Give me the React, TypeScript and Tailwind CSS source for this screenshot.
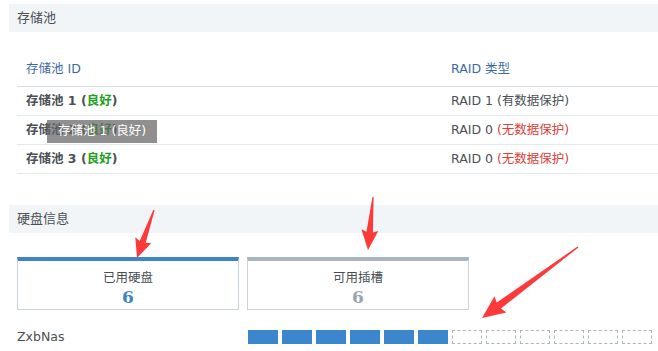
import React from 'react'

const font = { fontFamily: '"DejaVu Sans", "Noto Sans CJK SC", sans-serif' }

const pools = [
  { id: '存储池 1', raid: 'RAID 1', prot: '(有数据保护)', safe: true },
  { id: '存储池 2', raid: 'RAID 0', prot: '(无数据保护)', safe: false },
  { id: '存储池 3', raid: 'RAID 0', prot: '(无数据保护)', safe: false },
]

// arrow polygon from tail to tip
function arrowPoints(tx: number, ty: number, px: number, py: number, head: number, hw: number, sw: number) {
  const dx = px - tx
  const dy = py - ty
  const len = Math.hypot(dx, dy)
  const ux = dx / len
  const uy = dy / len
  const nx = -uy
  const ny = ux
  const bx = px - ux * head
  const by = py - uy * head
  const pts = [
    [tx + nx * 0.6, ty + ny * 0.6],
    [bx + nx * sw, by + ny * sw],
    [bx + nx * hw - ux * 2, by + ny * hw - uy * 2],
    [px, py],
    [bx - nx * hw - ux * 2, by - ny * hw - uy * 2],
    [bx - nx * sw, by - ny * sw],
    [tx - nx * 0.6, ty - ny * 0.6],
  ]
  return pts.map((p) => p.map((v) => v.toFixed(1)).join(',')).join(' ')
}

function SectionTitle({ children }: { children: React.ReactNode }) {
  return (
    <div className="ml-[9px] flex h-[28px] items-center bg-[#f2f5f8] pl-[8px] text-[13px] text-[#4a4f55]">
      {children}
    </div>
  )
}

function Card({ label, value, top, color }: { label: string; value: string; top: string; color: string }) {
  return (
    <div className={`flex h-[53px] w-[222px] flex-col items-center border border-t-4 border-[#c9d3de] ${top}`}>
      <div className="mt-[9px] text-[12.5px] leading-[16px] text-[#4a4f55]">{label}</div>
      <div
        className={`mt-[2px] text-[17px] font-bold leading-[18px] ${color}`}
        style={{ fontFamily: '"DejaVu Serif", "Liberation Serif", serif' }}
      >
        {value}
      </div>
    </div>
  )
}

export default function App() {
  return (
    <div className="relative h-[351px] w-[658px] overflow-hidden bg-white" style={font}>
      <div className="pt-[4px]">
        <SectionTitle>存储池</SectionTitle>

        <div className="ml-[17px] mt-[21px] text-[12.5px]">
          <div className="grid h-[34px] grid-cols-[425px_1fr] items-center border-b border-[#d5dde6] pl-[9px] text-[#3c6aa3]">
            <div>存储池 ID</div>
            <div>RAID 类型</div>
          </div>
          {pools.map((p) => (
            <div
              key={p.id}
              className="grid h-[29px] grid-cols-[425px_1fr] items-center border-b border-[#e4e9ee] pl-[9px] text-[#4a4f55]"
            >
              <div className="font-bold">
                {p.id} (<span className="text-[#22a022]">良好</span>)
              </div>
              <div>
                {p.raid} <span className={p.safe ? '' : 'text-[#de4138]'}>{p.prot}</span>
              </div>
            </div>
          ))}
        </div>

        <div className="mt-[31px]">
          <SectionTitle>硬盘信息</SectionTitle>
        </div>

        <div className="ml-[17px] mt-[24px] flex gap-[8px]">
          <Card label="已用硬盘" value="6" top="border-t-[#3d85c9]" color="text-[#3d85c9]" />
          <Card label="可用插槽" value="6" top="border-t-[#a9b5c2]" color="text-[#9aa4b0]" />
        </div>

        <div className="ml-[17px] mt-[18px] flex items-center">
          <div className="w-[231px] text-[12.5px] text-[#4a4f55]">ZxbNas</div>
          <div className="flex gap-[4px]">
            {Array.from({ length: 12 }).map((_, i) =>
              i < 6 ? (
                <div key={i} className="h-[14px] w-[30px] bg-[#3b86cc]" />
              ) : (
                <div key={i} className="h-[14px] w-[30px] border border-dashed border-[#aab6c3]" />
              ),
            )}
          </div>
        </div>
      </div>

      {/* hover tooltip */}
      <div className="absolute left-[47px] top-[120px] flex h-[23px] items-center bg-[rgba(100,100,100,0.72)] px-[11px] text-[12.5px] text-white">
        存储池 1 (良好)
      </div>

      <svg className="pointer-events-none absolute left-0 top-0" width="658" height="351">
        <polygon points={arrowPoints(154, 210, 137, 258, 17, 8.5, 3.2)} fill="#fd3a3a" />
        <polygon points={arrowPoints(373, 197, 368, 250, 18, 8.5, 3.2)} fill="#fd3a3a" />
        <polygon points={arrowPoints(578, 247, 482, 318, 21, 10, 3.6)} fill="#fd3a3a" />
      </svg>
    </div>
  )
}
